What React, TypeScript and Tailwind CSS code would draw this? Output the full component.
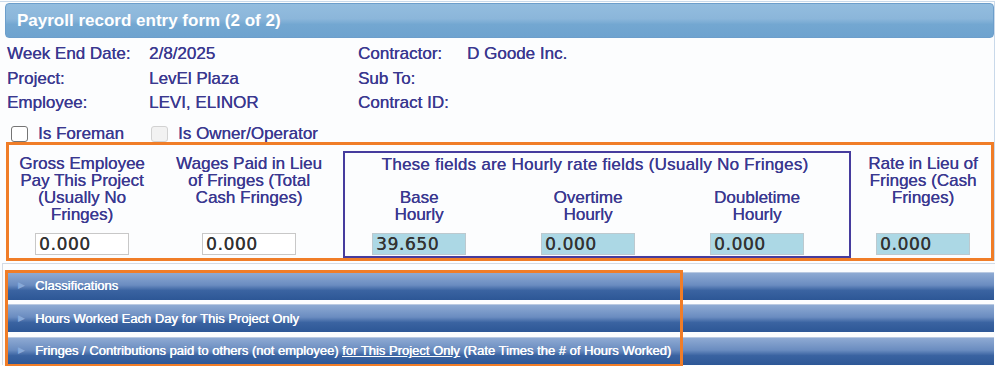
const info = [
  ["Week End Date:", "2/8/2025", "Contractor:", "D Goode Inc."],
  ["Project:", "LevEl Plaza", "Sub To:", ""],
  ["Employee:", "LEVI, ELINOR", "Contract ID:", ""],
];

function Field({ value, hourly }: { value: string; hourly?: boolean }) {
  return (
    <input
      readOnly
      value={value}
      className={`w-[94px] h-[22px] border pl-[3px] font-['DejaVu_Sans',sans-serif] text-[17px] tracking-[0.6px] text-[#333333] [text-shadow:0.3px_0_0_#333] outline-none ${
        hourly ? "bg-[#acd8e5] border-[#bcc9cf]" : "bg-white border-[#c8c8c8]"
      }`}
    />
  );
}

function Bar({ children }: { children: React.ReactNode }) {
  return (
    <div className="h-[28px] flex items-center border-t border-[#b9c9e1] bg-[linear-gradient(#8eaad3,#6a8cc0_45%,#3a63a1_65%,#2d5796)] text-white text-[13px]">
      <span className="ml-[12px] mr-[10px] text-[9px] text-[#86a9da]">▶</span>
      <span className="[text-shadow:0.4px_0_0_#fff]">{children}</span>
    </div>
  );
}

export default function App() {
  return (
    <div className="relative w-[995px] h-[366px] overflow-hidden bg-[#fcfdfe] font-['Liberation_Sans',Arial,sans-serif] text-[#3a3890]">
      <div className="mt-px border-t border-r border-[#c9d9ea] pt-[1px]">
        <div className="ml-[5px] h-[35px] rounded-[4px] border border-[#6c9ecb] bg-[linear-gradient(#93bddf,#8bb6da_45%,#73a7d1_62%,#6ea3cf)] pl-[11px] text-[17px] font-bold leading-[33px] text-white">
          Payroll record entry form (2 of 2)
        </div>

        <div className="mt-[4px] pl-[7px] grid grid-cols-[142px_209px_109px_1fr] text-[17px] leading-[24.5px] [text-shadow:0.2px_0_0_#3a3890]">
          {info.map((r) => (
            <div key={r[0]} className="contents">
              <div>{r[0]}</div>
              <div>{r[1]}</div>
              <div>{r[2]}</div>
              <div>{r[3]}</div>
            </div>
          ))}
        </div>

        <div className="mt-[10px] mb-[-1px] h-[17px] flex items-center text-[17px] [text-shadow:0.2px_0_0_#3a3890]">
          <span className="ml-[11px] w-[17px] h-[16px] rounded-[3px] border-[1.5px] border-[#757575] bg-white" />
          <span className="ml-[10px]">Is Foreman</span>
          <span className="ml-[27px] w-[17px] h-[16px] rounded-[3px] border border-[#d2d2d2] bg-[#f2f2f2]" />
          <span className="ml-[10px]">Is Owner/Operator</span>
        </div>

        <div className="ml-[6px] w-[988px] h-[119px] border-[3px] border-[#f07d28] flex text-[17px] leading-[17.3px] text-center [text-shadow:0.25px_0_0_#3a3890]">
          <div className="w-[146px] pt-[10px] flex flex-col items-center">
            <div className="h-[78px]">
              Gross Employee
              <br />
              Pay This Project
              <br />
              (Usually No
              <br />
              Fringes)
            </div>
            <Field value="0.000" />
          </div>
          <div className="w-[188px] pt-[10px] flex flex-col items-center">
            <div className="h-[78px]">
              Wages Paid in Lieu
              <br />
              of Fringes (Total
              <br />
              Cash Fringes)
            </div>
            <Field value="0.000" />
          </div>
          <div className="w-[508px] mt-[6px] border-2 border-[#463c9e] pt-[3px]">
            <div className="ml-[-4px] tracking-[0.25px]">These fields are Hourly rate fields (Usually No Fringes)</div>
            <div className="mt-[16.3px] pl-[27px] flex gap-[75px]">
              {[
                ["Base", "39.650"],
                ["Overtime", "0.000"],
                ["Doubletime", "0.000"],
              ].map(([n, v]) => (
                <div key={n} className="w-[94px] flex flex-col items-center">
                  <div className="h-[43.6px] whitespace-nowrap">
                    {n}
                    <br />
                    Hourly
                  </div>
                  <Field value={v} hourly />
                </div>
              ))}
            </div>
          </div>
          <div className="flex-1 pt-[10px] pl-[4px] flex flex-col items-center">
            <div className="h-[78px]">
              Rate in Lieu of
              <br />
              Fringes (Cash
              <br />
              Fringes)
            </div>
            <Field value="0.000" hourly />
          </div>
        </div>
      </div>

      <div className="mt-[2px] ml-[2px] border-t border-l border-[#d3dbe5] pt-[8px] pl-[3px]">
        <div className="w-[988px] flex flex-col gap-[4.5px]">
          <Bar>Classifications</Bar>
          <Bar>Hours Worked Each Day for This Project Only</Bar>
          <Bar>
            Fringes / Contributions paid to others (not employee) <span className="underline">for This Project Only</span> (Rate
            Times the # of Hours Worked)
          </Bar>
        </div>
      </div>

      <div className="absolute left-[5px] top-[270px] w-[678px] h-[97px] border-[3px] border-[#f07d28]" />
    </div>
  );
}
